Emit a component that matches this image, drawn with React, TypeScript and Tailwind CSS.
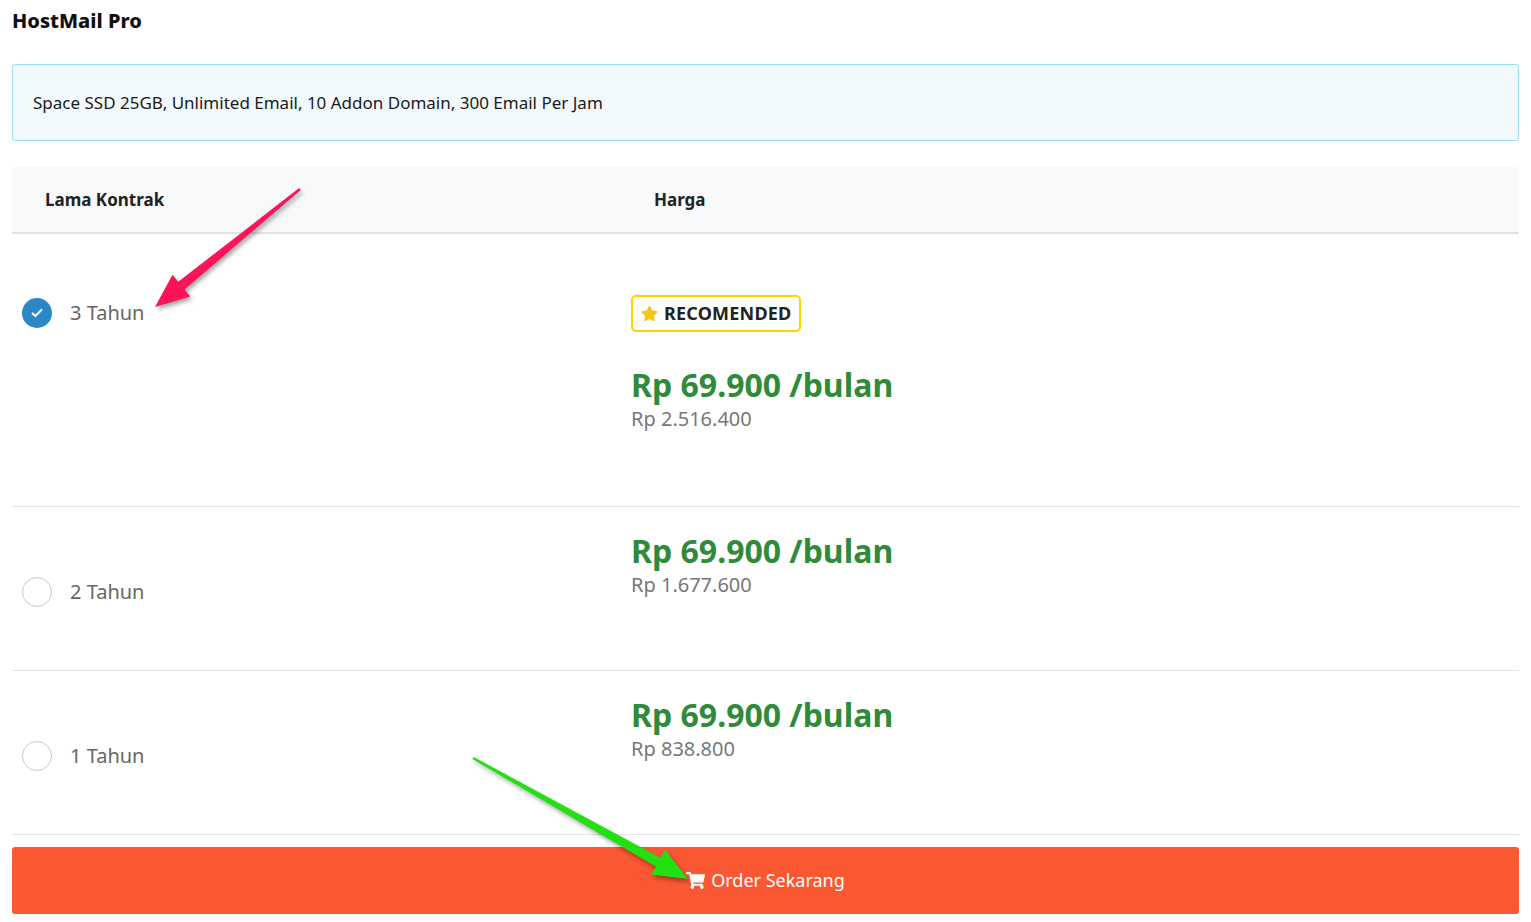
import { FaShoppingCart, FaStar } from 'react-icons/fa';

const rows = [
  { label: '3 Tahun', total: 'Rp 2.516.400', checked: true },
  { label: '2 Tahun', total: 'Rp 1.677.600', checked: false },
  { label: '1 Tahun', total: 'Rp 838.800', checked: false },
];

function Radio({ checked }: { checked: boolean }) {
  return checked ? (
    <span className="flex h-[30px] w-[30px] items-center justify-center rounded-full bg-[#2a87c8]">
      <svg viewBox="0 0 16 16" className="h-[14px] w-[14px]">
        <path d="M3 8.5l3 3 7-7" fill="none" stroke="white" strokeWidth="2.4" strokeLinecap="round" strokeLinejoin="round" />
      </svg>
    </span>
  ) : (
    <span className="block h-[30px] w-[30px] rounded-full border border-[#c9c9c9] bg-white" />
  );
}

// Panah anotasi: garis tebal dengan kepala segitiga, dari (x1,y1) ke (x2,y2).
function Arrow({ x1, y1, x2, y2, color }: { x1: number; y1: number; x2: number; y2: number; color: string }) {
  const a = Math.atan2(y2 - y1, x2 - x1);
  const len = Math.hypot(x2 - x1, y2 - y1);
  const head = 34;
  const bx = x1 + Math.cos(a) * (len - head);
  const by = y1 + Math.sin(a) * (len - head);
  const n = a + Math.PI / 2;
  const p = (x: number, y: number, w: number) => `${(x + Math.cos(n) * w).toFixed(1)},${(y + Math.sin(n) * w).toFixed(1)}`;
  const pts = [p(x1, y1, 1.2), p(bx, by, 5), p(bx, by, 14), `${x2},${y2}`, p(bx, by, -14), p(bx, by, -5), p(x1, y1, -1.2)].join(' ');
  return <polygon points={pts} fill={color} style={{ filter: 'drop-shadow(2px 3px 2px rgba(0,0,0,0.35))' }} />;
}

export default function App() {
  return (
    <div className="relative min-h-[922px] bg-white px-[12px] pt-[8px] font-['Lato',sans-serif]">
      <h1 className="font-['Inter',sans-serif] text-[20px] font-extrabold leading-[26px] text-[#111]">HostMail Pro</h1>
      <div className="mt-[30px] flex h-[77px] items-center rounded-[3px] border border-[#9ddcf5] bg-[#f1f9fd] px-[20px] font-['Roboto',sans-serif] text-[17px] text-[#1a1a1a]">
        Space SSD 25GB, Unlimited Email, 10 Addon Domain, 300 Email Per Jam
      </div>
      <div className="mt-[26px] grid h-[67px] grid-cols-[619px_1fr] items-center border-b-2 border-[#dee2e6] bg-[#f8f9fa] text-[17px] font-bold text-[#222]">
        <div className="pl-[33px]">Lama Kontrak</div>
        <div className="pl-[23px]">Harga</div>
      </div>
      {rows.map((r, i) => (
        <div
          key={r.label}
          className={`grid grid-cols-[619px_1fr] border-b border-[#e2e2e2] ${i === 0 ? 'h-[273px]' : 'h-[164px]'}`}
        >
          <div className={`flex gap-[18px] pl-[10px] ${i === 0 ? 'items-start pt-[64px]' : 'items-center pt-[6px]'}`}>
            <Radio checked={r.checked} />
            <span className="text-[20px] leading-[30px] text-[#666]">{r.label}</span>
          </div>
          <div className={i === 0 ? 'pt-[61px]' : 'pt-[25px]'}>
            {i === 0 && (
              <div className="mb-[34px] inline-flex h-[37px] items-center gap-[6px] rounded-[5px] border-2 border-[#ffd200] px-[8px] text-[18px] font-bold tracking-[0.2px] text-[#222]">
                <FaStar className="text-[17px] text-[#f5c518]" />
                RECOMENDED
              </div>
            )}
            <div className="text-[32px] font-bold leading-[38px] text-[#2f8a3a]">Rp 69.900 /bulan</div>
            <div className="text-[20px] leading-[30px] text-[#777]">{r.total}</div>
          </div>
        </div>
      ))}
      <button className="mt-[12px] flex h-[67px] w-full items-center justify-center gap-[6px] rounded-[3px] bg-[#fa5733] text-[18px] text-white">
        <FaShoppingCart className="text-[19px]" />
        Order Sekarang
      </button>
      <svg className="pointer-events-none absolute left-0 top-0" width="1531" height="922">
        <Arrow x1={300} y1={189} x2={155} y2={307} color="#fb1458" />
        <Arrow x1={473} y1={758} x2={688} y2={879} color="#22e011" />
      </svg>
    </div>
  );
}
